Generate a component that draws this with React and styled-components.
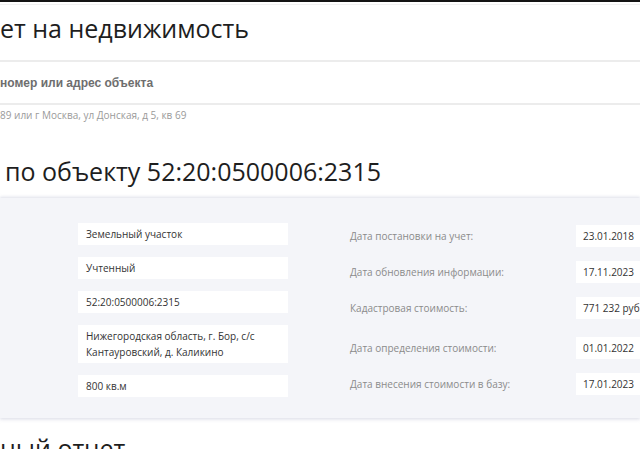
import styled, { createGlobalStyle } from "styled-components";

const GlobalStyle = createGlobalStyle`
    html, body {
        margin: 0;
        padding: 0;
        background: #ffffff;
    }
    body {
        font-family: "Open Sans", "Noto Sans", Arial, sans-serif;
        color: #222;
    }
`;

const leftRows = [
    "Земельный участок",
    "Учтенный",
    "52:20:0500006:2315",
    "Нижегородская область, г. Бор, с/с Кантауровский, д. Каликино",
    "800 кв.м",
];

const rightRows = [
    { label: "Дата постановки на учет:", value: "23.01.2018" },
    { label: "Дата обновления информации:", value: "17.11.2023" },
    { label: "Кадастровая стоимость:", value: "771 232 руб." },
    { label: "Дата определения стоимости:", value: "01.01.2022", shift: 4 },
    { label: "Дата внесения стоимости в базу:", value: "17.01.2023" },
];

const Page = styled.div`
    width: 640px;
    height: 449px;
    overflow: hidden;
    border-top: 2px solid #141414;
    box-sizing: border-box;
`;

const TitleBar = styled.div`
    margin-top: 2px;
    border-top: 1px solid #f1f1f1;
    padding-top: 6px;
    height: 49px;
`;

const Heading = styled.h1`
    margin: ${(p) => p.$top || 0}px 0 0;
    padding-left: ${(p) => p.$indent || 0}px;
    font-weight: 400;
    font-size: 25px;
    line-height: 34px;
    color: #1e1e1e;
    white-space: nowrap;
`;

const SearchBox = styled.div`
    height: 41px;
    border-top: 2px solid #ececec;
    border-bottom: 2px solid #ececec;
    display: flex;
    align-items: center;
    font-family: "Liberation Sans", Arial, sans-serif;
    font-size: 12px;
    font-weight: 700;
    color: #6e6e6e;
    white-space: nowrap;
`;

const Hint = styled.div`
    font-size: 10px;
    color: #9a9a9a;
    padding-top: 3px;
    line-height: 15px;
    white-space: nowrap;
`;

const Card = styled.div`
    margin-top: 10px;
    background: #f4f5f9;
    box-shadow: 0 -1px 3px rgba(200, 204, 220, 0.6), 0 2px 3px rgba(210, 212, 225, 0.5);
    padding: 25px 0 21px 78px;
    display: flex;
`;

const Column = styled.div`
    display: flex;
    flex-direction: column;
    flex-shrink: 0;
    gap: ${(p) => p.$gap}px;
    width: ${(p) => p.$width}px;
    padding-top: ${(p) => p.$top || 0}px;
`;

const Row = styled.div`
    display: flex;
    align-items: center;
    margin-top: ${(p) => p.$shift || 0}px;
`;

const Label = styled.div`
    width: 226px;
    flex-shrink: 0;
    font-size: 10px;
    color: #8b8b8b;
`;

const Value = styled.div`
    background: #ffffff;
    width: ${(p) => p.$width}px;
    flex-shrink: 0;
    box-sizing: border-box;
    padding: 3px ${(p) => p.$pad}px;
    min-height: 22px;
    display: flex;
    align-items: center;
    font-size: 10px;
    line-height: 16px;
    color: #333;
`;

export default function App() {
    return (
        <>
            <GlobalStyle />
            <Page>
                <TitleBar>
                    <Heading>ет на недвижимость</Heading>
                </TitleBar>
                <SearchBox>номер или адрес объекта</SearchBox>
                <Hint>89 или г Москва, ул Донская, д 5, кв 69</Hint>
                <Heading $top={31} $indent={5}>
                    по объекту 52:20:0500006:2315
                </Heading>
                <Card>
                    <Column $gap={12} $width={272}>
                        {leftRows.map((v) => (
                            <Value key={v} $width={210} $pad={8}>
                                {v}
                            </Value>
                        ))}
                    </Column>
                    <Column $gap={14} $width={400} $top={2}>
                        {rightRows.map((r) => (
                            <Row key={r.label} $shift={r.shift}>
                                <Label>{r.label}</Label>
                                <Value $width={110} $pad={7}>
                                    {r.value}
                                </Value>
                            </Row>
                        ))}
                    </Column>
                </Card>
                <Heading $top={13}>ный отчет</Heading>
            </Page>
        </>
    );
}
